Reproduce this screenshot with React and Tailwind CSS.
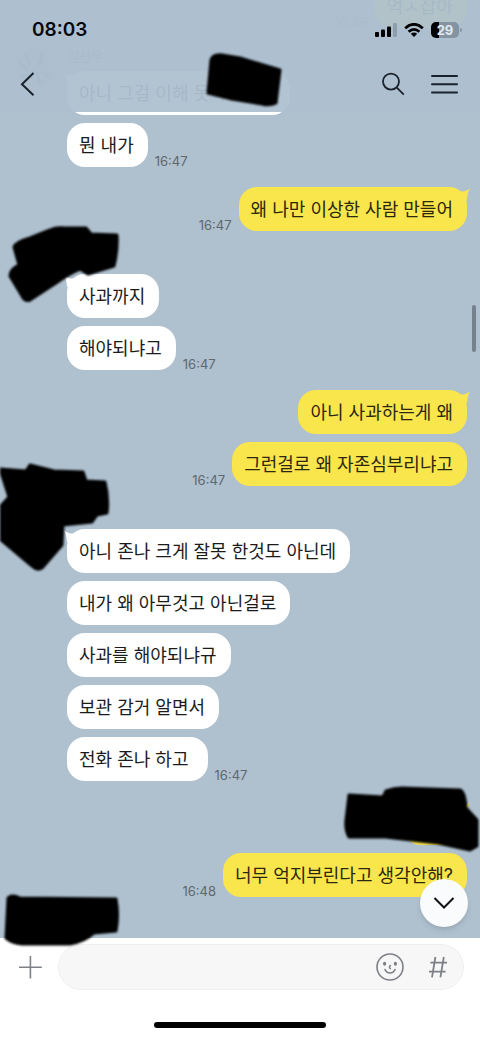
import React from 'react';

const GROUPS = [
    { id: 1, from: 'me', time: '16:46', messages: ['억ㅅ잡아'] },
    { id: 2, from: 'friend', name: '김선우', time: '16:47', messages: ['아니 그걸 이해 못하는거냐', '뭔 내가'] },
    { id: 3, from: 'me', time: '16:47', messages: ['왜 나만 이상한 사람 만들어'] },
    { id: 4, from: 'friend', time: '16:47', messages: ['사과까지', '해야되냐고'], mark: 'first' },
    { id: 5, from: 'me', time: '16:47', messages: ['아니 사과하는게 왜', '그런걸로 왜 자존심부리냐고'] },
    {
        id: 6,
        from: 'friend',
        time: '16:47',
        messages: ['아니 존나 크게 잘못 한것도 아닌데', '내가 왜 아무것고 아닌걸로', '사과를 해야되냐규', '보관 감거 알면서', '전화 존나 하고 '],
        mark: 'second',
    },
    { id: 7, from: 'me', time: '16:48', messages: ['', '너무 억지부린다고 생각안해?'], mark: 'third' },
    { id: 8, from: 'friend', messages: [], mark: 'fourth' },
];

// 가림 처리용 검은 붓칠
const MARKS = {
    title: {
        className: 'left-[200px] top-[48px] h-[64px] w-[90px]',
        box: '200 48 90 64',
        path: 'M211 60Q213 54 222 55L240 58L280 70L276 103Q270 106 262 104L232 99L208 93Z',
    },
    first: {
        className: 'left-0 -top-[31px] h-[90px] w-[125px]',
        box: '0 220 125 90',
        path: 'M14 247Q16 242 30 238L50 230Q56 227 65 228L86 228L91 234L117 235Q118 250 114 266L104 269L88 274L80 269Q68 274 56 283L30 300Q25 302 22 296L10 276Q10 269 19 265Z',
    },
    second: {
        className: 'left-0 -top-[50px] h-[124px] w-[125px]',
        box: '0 456 125 124',
        path: 'M0 469L26 471L30 465L54 471L83 472L86 481L105 482Q109 498 107 513L97 515L92 522L63 525L62 545L42 568Q37 571 32 566L0 539V507L9 497Z',
    },
    third: {
        className: 'right-0 -top-[21px] h-[80px] w-[140px]',
        box: '340 780 140 80',
        path: 'M349 795L383 797L386 791Q394 788 402 788L460 790Q465 792 466 808L477 820V846L470 850L438 843L385 837L349 837Q345 830 346 820Z',
    },
    fourth: {
        className: 'left-0 -top-[30px] h-[64px] w-[125px]',
        box: '0 887 125 64',
        path: 'M8 898Q12 894 20 898L116 899Q119 915 116 931L94 933Q84 942 70 944L22 944Q12 943 6 938Z',
    },
};

const Mark = ({ name }) => {
    const mark = MARKS[name];
    return (
        <svg viewBox={mark.box} className={`pointer-events-none absolute z-10 blur-[1px] ${mark.className}`} aria-hidden="true">
            <path d={mark.path} fill="#000" stroke="#000" strokeWidth="3" strokeLinejoin="round" />
        </svg>
    );
};

// 말풍선 꼬리
const Tail = ({ mine }) => (
    <svg
        viewBox="0 0 12 14"
        className={`absolute top-0 h-[14px] w-[12px] ${mine ? '-right-[4px] text-[#f9e54c]' : '-left-[4px] -scale-x-100 text-white'}`}
        aria-hidden="true"
    >
        <path d="M1 4Q3 5.2 6 4Q8.5 3.2 11.2 1.4Q8.4 5 8 13L2 10Z" fill="currentColor" />
    </svg>
);

const Bubble = ({ text, mine, tail }) => (
    <div
        className={`relative flex h-11 items-center rounded-[18px] pt-[2px] pl-3 pr-[14px] text-lg whitespace-pre ${
            mine ? 'min-w-16 bg-[#f9e54c] text-[#2c270f]' : 'bg-white text-[#1b1b1b]'
        }`}
    >
        {tail && <Tail mine={mine} />}
        {text}
    </div>
);

const MessageGroup = ({ group }) => {
    const mine = group.from === 'me';
    const last = group.messages.length - 1;

    return (
        <li className={`relative flex flex-col gap-2 ${mine ? 'items-end pr-[13px]' : 'items-start pl-[67px]'}`}>
            {!mine && (
                <div className="-mb-2 h-[23px] text-[13px] leading-4 text-[#4f5b66]">
                    {group.name && (
                        <>
                            <svg viewBox="0 0 40 40" className="absolute left-[15px] top-0 size-10" aria-hidden="true">
                                <rect width="40" height="40" rx="15" fill="#a3b4c3" />
                                <path d="M4 14l9 8M11 5l4 13M28 4l-4 14M5 29l14-4M22 24l3 12M29 25l6 5" stroke="#66747f" strokeWidth="3" />
                            </svg>
                            {group.name}
                        </>
                    )}
                </div>
            )}
            {group.messages.map((text, i) => (
                <div key={i} className={`flex items-end gap-[7px] ${mine ? 'flex-row-reverse' : ''}`}>
                    <Bubble text={text} mine={mine} tail={i === 0} />
                    {i === last && <time className="text-[13px] leading-3 text-[#5d6871]">{group.time}</time>}
                </div>
            ))}
            {group.mark && <Mark name={group.mark} />}
        </li>
    );
};

const StatusBar = () => (
    <div className="flex h-[60px] items-center justify-between pl-8 pr-[18px]">
        <span className="text-[19px] font-semibold text-[#05080d]">08:03</span>
        <div className="flex items-center gap-[7px]">
            <svg viewBox="0 0 22 14" className="h-[14px] w-[22px]" aria-hidden="true">
                <rect x="0" y="9" width="4" height="5" rx="1" />
                <rect x="6" y="6.5" width="4" height="7.5" rx="1" />
                <rect x="12" y="3.5" width="4" height="10.5" rx="1" />
                <rect x="18" y="0" width="4" height="14" rx="1" fill="#8f9eac" />
            </svg>
            <svg viewBox="0 0 20 14" className="h-[14px] w-5" fill="none" stroke="#000" strokeWidth="2.8" aria-hidden="true">
                <path d="M1.2 5.2Q10 -2.6 18.8 5.2" />
                <path d="M4.6 8.7Q10 4 15.4 8.7" />
                <path d="M10 14L6.8 10.8Q10 8.2 13.2 10.8Z" fill="#000" stroke="none" />
            </svg>
            <div className="flex items-center gap-px">
                <div className="flex h-4 w-7 items-center justify-center rounded-[5px] bg-linear-to-r from-black from-29% to-[#8594a2] to-29% text-[13px] font-bold leading-4 text-[#e3eaf0]">
                    29
                </div>
                <div className="h-1 w-[2px] rounded-r-full bg-[#8594a2]" />
            </div>
        </div>
    </div>
);

const ChatHeader = () => (
    <header className="absolute inset-x-0 top-0 z-20 h-28 bg-[#aec0d0]/95">
        <StatusBar />
        <nav className="flex h-12 items-center justify-between pl-5 pr-[22px] text-[#1b222b]">
            <button type="button" aria-label="뒤로">
                <svg viewBox="0 0 16 24" className="h-6 w-4" fill="none" stroke="currentColor" strokeWidth="2">
                    <path d="M13.5 1L2 12.2L13.5 23.2" />
                </svg>
            </button>
            <div className="flex items-center gap-6">
                <button type="button" aria-label="검색">
                    <svg viewBox="0 0 24 24" className="size-6" fill="none" stroke="currentColor" strokeWidth="1.8">
                        <circle cx="9" cy="9.6" r="8" />
                        <path d="M14.8 15.6L21.8 22.6" />
                    </svg>
                </button>
                <button type="button" aria-label="메뉴">
                    <svg viewBox="0 0 28 24" className="h-6 w-7" fill="none" stroke="currentColor" strokeWidth="2" strokeLinecap="round">
                        <path d="M2 4H27M2 12.2H27M2 20.4H27" />
                    </svg>
                </button>
            </div>
        </nav>
        <Mark name="title" />
    </header>
);

const MessageInput = () => (
    <footer className="bg-white pt-[6px] pb-[11px]">
        <div className="flex items-center gap-4 pl-[18px] pr-4 text-[#7d8087]">
            <button type="button" aria-label="첨부">
                <svg viewBox="0 0 24 24" className="size-6" fill="none" stroke="currentColor" strokeWidth="1.6">
                    <path d="M12.4 1V23.5M1 12.2H23.8" />
                </svg>
            </button>
            <div className="flex h-[46px] flex-1 items-center rounded-full border border-[#f0f0f1] bg-[#f7f7f7] pl-4 pr-[14px]">
                <input type="text" aria-label="메시지 입력" className="min-w-0 flex-1 bg-transparent text-lg text-[#1b1b1b] outline-none" />
                <button type="button" aria-label="이모티콘" className="mr-[23px]">
                    <svg viewBox="0 0 28 28" className="size-7" fill="none" stroke="currentColor" strokeWidth="1.6" strokeLinecap="round">
                        <circle cx="14" cy="14" r="13" />
                        <path d="M9 16.5Q10.5 20 14 20Q17.5 20 19 16.5" />
                        <path d="M14.3 12.6Q12.6 14.6 14.3 15.6" />
                        <ellipse cx="8.6" cy="10.8" rx="0.8" ry="1.2" fill="currentColor" />
                        <ellipse cx="19.4" cy="10.8" rx="0.8" ry="1.2" fill="currentColor" />
                    </svg>
                </button>
                <button type="button" aria-label="샵 검색">
                    <svg viewBox="0 0 22 24" className="h-6 w-[22px]" fill="none" stroke="currentColor" strokeWidth="1.8">
                        <path d="M8.4 2L5 22.4M16.8 2L13.4 22.4M3.4 7.6H20M2 16.6H18.6" />
                    </svg>
                </button>
            </div>
        </div>
        <div className="mx-auto mt-8 h-[6px] w-[172px] rounded-full bg-black" />
    </footer>
);

const App = () => {
    return (
        <div className="bg-white font-[Inter,'Noto_Sans_CJK_KR',sans-serif]">
            <main className="relative flex flex-col bg-[#afc0cf] pb-[6px]">
                <ChatHeader />
                <ul className="-mt-4 flex flex-col gap-5">
                    {GROUPS.map((group) => (
                        <MessageGroup key={group.id} group={group} />
                    ))}
                </ul>
                <div className="absolute right-1 top-[305px] h-[47px] w-1 rounded-full bg-[#75818c]" />
                <button
                    type="button"
                    aria-label="맨 아래로"
                    className="absolute bottom-[11px] right-3 z-20 flex size-12 items-center justify-center rounded-full bg-[#f9fbfc] text-[#101214] shadow-md"
                >
                    <svg viewBox="0 0 22 14" className="h-[14px] w-[22px]" fill="none" stroke="currentColor" strokeWidth="2">
                        <path d="M1.5 2L11 11.5L20.5 2" />
                    </svg>
                </button>
            </main>
            <MessageInput />
        </div>
    );
};

export default App;
